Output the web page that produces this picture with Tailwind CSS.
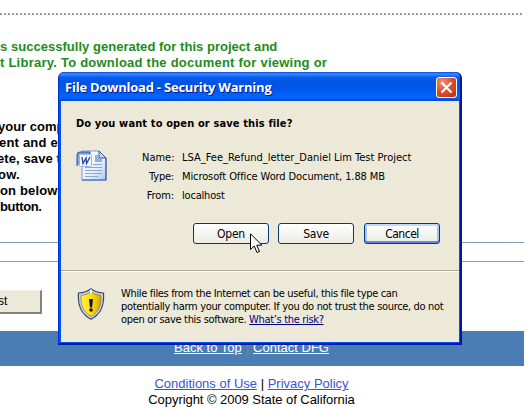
<!DOCTYPE html>
<html lang="en">
<head>
<meta charset="utf-8">
<title>File Download</title>
<script src="https://cdn.jsdelivr.net/npm/@tailwindcss/browser@4"></script>
</head>
<body class="bg-white w-[532px] h-[409px] overflow-hidden relative font-['Liberation_Sans',Arial,sans-serif] text-black">
<main class="w-[524px] h-[409px] flex flex-col overflow-hidden">
  <div class="h-[15px] shrink-0 flex items-end">
    <div class="h-[2px] w-full bg-[repeating-linear-gradient(90deg,#999_0_2px,#fff_2px_4px)]"></div>
  </div>
  <div class="mt-[24px] h-[32px] shrink-0 text-[13px] leading-[16px] font-bold text-[#228b22] whitespace-nowrap">
    <p class="tracking-[0.03px]">s successfully generated for this project and</p>
    <p class="tracking-[0.24px]">t Library. To download the document for viewing or</p>
  </div>
  <div class="mt-[48px] h-[96px] shrink-0 text-[13px] leading-[16px] font-bold tracking-[0.2px] whitespace-nowrap">
    <p class="-ml-[2px] tracking-[0px]">your comp</p>
    <p class="-ml-[1px]">ent and e</p>
    <p class="-ml-[3px] tracking-[0.1px]">ete, save t</p>
    <p class="-ml-[2px]">ow.</p>
    <p class="tracking-[0.15px]">on below</p>
    <p class="tracking-[-0.35px]">button.</p>
  </div>
  <div class="mt-[27px] h-[20px] shrink-0 border-y border-[#7f9db9]"></div>
  <div class="mt-[28px] w-[42px] h-[24px] shrink-0 bg-[#ece9d8] border-r-2 border-b-2 border-t border-t-[#f4f2e8] border-r-[#85827a] border-b-[#85827a] text-[12px] leading-[21px]"><span class="-ml-[2px]">st</span></div>
  <footer class="mt-[17px] shrink-0 text-[13px] whitespace-nowrap">
    <div class="h-[35px] bg-[#4a7db3] text-white text-center leading-[16px] pt-[9px] pr-[21px] flex justify-center gap-[4px]"><a class="underline">Back to Top</a><span class="text-[#6a9a3a]">|</span><a class="underline">Contact DFG</a></div>
    <div class="pt-[10px] pr-[21px] leading-[16px] flex flex-col items-center">
      <p><a class="underline text-[#3a55d0]">Conditions of Use</a> | <a class="underline text-[#3a55d0]">Privacy Policy</a></p>
      <p class="tracking-[-0.05px]">Copyright © 2009 State of California</p>
    </div>
  </footer>
</main>

<section class="absolute left-[58px] top-[72px] w-[404px] h-[273px] rounded-t-[6px] bg-[#0054ee] border-l border-l-[#0030c8] border-r-2 border-b-2 border-r-[#00189c] border-b-[#00189c] flex flex-col font-['DejaVu_Sans_Condensed','DejaVu_Sans',sans-serif] text-[11px] overflow-hidden whitespace-nowrap">
  <header class="h-[29px] shrink-0 flex items-center justify-between pl-[6px] pr-[3px] pt-[2px] bg-[linear-gradient(#0a4ad0_0,#3a8cff_2px,#0a5ef0_5px,#0054e3_10px,#0058ee_18px,#0066ff_25px,#0048d0_29px)]">
    <h1 class="text-white font-bold text-[13px] font-['Open_Sans','Noto_Sans',sans-serif] tracking-[-0.22px] pt-[1px] [text-shadow:1px_1px_0_#0a1883]">File Download - Security Warning</h1>
    <svg class="w-[21px] h-[21px]" viewBox="0 0 21 21">
      <defs><radialGradient id="c" cx=".3" cy=".25" r=".9"><stop offset="0" stop-color="#f0907a"/><stop offset=".5" stop-color="#e0502c"/><stop offset="1" stop-color="#c03810"/></radialGradient></defs>
      <rect x=".5" y=".5" width="20" height="20" rx="2.5" fill="url(#c)" stroke="#fff"/>
      <path d="M5.500 5.500l10 10M15.500 5.500l-10 10" stroke="#fff" stroke-width="2.1"/>
    </svg>
  </header>
  <div class="ml-[2px] mr-[1px] h-[241px] bg-[#ece9d8] flex flex-col">
    <div class="h-[170px] shrink-0 border-b border-[#aca899] pl-[15px] pt-[15px]">
      <h2 class="h-[16px] leading-[16px] font-bold"><span class="tracking-[0.13px]">Do you want to open or save this file?</span></h2>
      <div class="flex mt-[16px]">
        <svg class="w-[32px] h-[32px] mt-[1px] shrink-0" viewBox="0 0 32 32">
          <defs><linearGradient id="d" x1="0" y1="0" x2="1" y2="1"><stop offset="0" stop-color="#fff"/><stop offset=".6" stop-color="#e7effb"/><stop offset="1" stop-color="#a9c5ee"/></linearGradient></defs>
          <path d="M6 2H23L30 9V31H6Z" fill="url(#d)" stroke="#7f9bd0"/>
          <path d="M6 31H30V9" fill="none" stroke="#3a5ea6" stroke-width="1.200"/>
          <path d="M23 2V9H30Z" fill="#c7d9f5" stroke="#33558f"/>
          <path d="M19 6h4v4h3v3h-7z" fill="#8fb0e2"/>
          <path d="M17 15.500h9M9 18.500h17M9 21.500h17M9 24.500h17M9 27.500h13" stroke="#8aa5d8"/>
          <path d="M1 17V6Q1 3 4 3H14V6" fill="#7f9fd6" stroke="#2f539c"/>
          <rect x="3.500" y="5.500" width="12" height="12" rx="1" fill="#f5f9ff" stroke="#a0b7df"/>
          <path d="M6 8L7 14.500L10 9L10.500 14.500L14 8" fill="none" stroke="#2450ad" stroke-width="1.400"/>
        </svg>
        <dl class="grid grid-cols-[32px_1fr] gap-x-[8px] leading-[19px] ml-[34px]">
          <dt class="text-right">Name:</dt><dd class="tracking-[0px]">LSA_Fee_Refund_letter_Daniel Lim Test Project</dd>
          <dt class="text-right tracking-[-0.2px]">Type:</dt><dd class="tracking-[-0.1px]">Microsoft Office Word Document, 1.88 MB</dd>
          <dt class="text-right tracking-[-0.1px]">From:</dt><dd class="tracking-[-0.2px]">localhost</dd>
        </dl>
      </div>
      <div class="flex ml-[117px] mt-[18px] text-[12px] tracking-[-0.2px]">
        <button class="w-[76px] h-[21px] mr-[9px] rounded-[3px] border border-[#003c74] bg-linear-to-b from-white to-[#ecebe4]">Open</button>
        <button class="w-[76px] h-[21px] mr-[10px] rounded-[3px] border border-[#003c74] bg-linear-to-b from-white to-[#ecebe4]">Save</button>
        <button class="w-[76px] h-[21px] rounded-[3px] border border-[#003c74] bg-linear-to-b from-white to-[#ecebe4] tracking-[-0.5px] shadow-[inset_0_2px_0_#c3d8fa,inset_0_-2px_0_#6982ee,inset_2px_0_0_#a5c2f5,inset_-2px_0_0_#a5c2f5]">Cancel</button>
      </div>
    </div>
    <div class="border-t border-white flex pt-[16px] pl-[16px]">
      <svg class="w-[28px] h-[32px] shrink-0" viewBox="0 0 28 32">
        <defs><linearGradient id="s"><stop offset="0" stop-color="#fff04a"/><stop offset=".5" stop-color="#ffe100"/><stop offset="1" stop-color="#d9a400"/></linearGradient></defs>
        <path d="M14 .7Q9 4.500 1.500 5C.5 18 4 26 14 31.300C24 26 27.500 18 26.500 5Q19 4.500 14 .7Z" fill="#c6d2ea" stroke="#3b4668" stroke-width="1.200"/>
        <path d="M14 4Q9 7 4 7.500C3.500 18 6.500 24 14 28.500C21.500 24 24.500 18 24 7.500Q19 7 14 4Z" fill="url(#s)" stroke="#8b8440" stroke-width=".8"/>
        <path d="M14 1.500v4" stroke="#fff" stroke-width="2"/>
        <path d="M12 11h4l-1 8.500h-2z" fill="#101030"/><circle cx="14" cy="22" r="1.800" fill="#101030"/>
      </svg>
      <div class="ml-[16px] -mt-[1px] leading-[13px] tracking-[-0.33px]">
        <p>While files from the Internet can be useful, this file type can</p>
        <p>potentially harm your computer. If you do not trust the source, do not</p>
        <p>open or save this software. <a class="underline text-[#000080]">What’s the risk?</a></p>
      </div>
    </div>
  </div>
</section>
<svg class="absolute left-[250px] top-[233px] w-[13px] h-[21px]" viewBox="0 0 13 21"><path d="M.5 .8V16.500L4.200 13L7 19.500L9.500 18.500L6.700 12.200H11.800Z" fill="#fff" stroke="#000"/></svg>
</body>
</html>
